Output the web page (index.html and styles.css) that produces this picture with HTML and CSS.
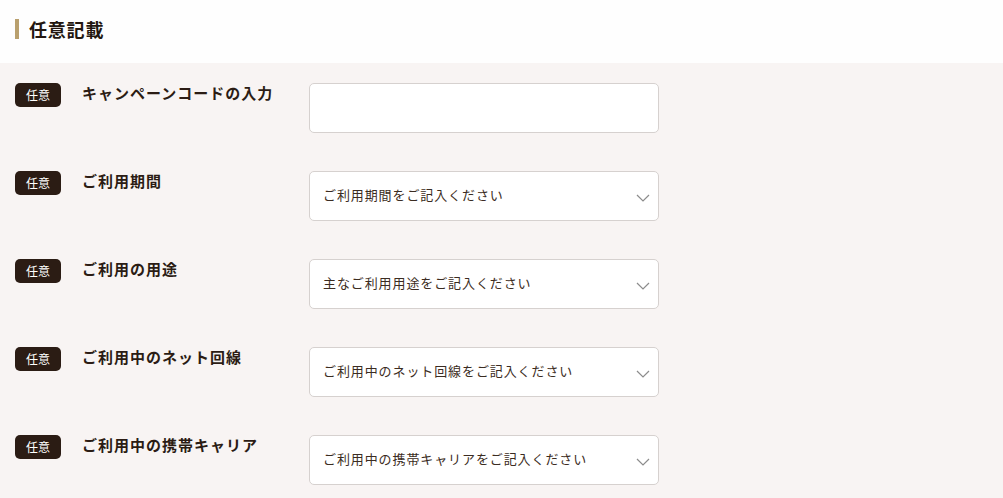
FILE: index.html
```html
<!DOCTYPE html>
<html lang="ja">
<head>
<meta charset="utf-8">
<link rel="stylesheet" href="styles.css">
</head>
<body>
<header class="head">
  <h2 class="title">任意記載</h2>
</header>
<section class="form">
  <div class="row">
    <span class="badge">任意</span>
    <span class="label">キャンペーンコードの入力</span>
    <div class="field"></div>
  </div>
  <div class="row">
    <span class="badge">任意</span>
    <span class="label">ご利用期間</span>
    <div class="field select"><span>ご利用期間をご記入ください</span><svg class="chev" width="14" height="8" viewBox="0 0 14 8"><polyline points="1,1 7,7 13,1" fill="none" stroke="#8c8c8c" stroke-width="1.2"/></svg></div>
  </div>
  <div class="row">
    <span class="badge">任意</span>
    <span class="label">ご利用の用途</span>
    <div class="field select"><span>主なご利用用途をご記入ください</span><svg class="chev" width="14" height="8" viewBox="0 0 14 8"><polyline points="1,1 7,7 13,1" fill="none" stroke="#8c8c8c" stroke-width="1.2"/></svg></div>
  </div>
  <div class="row">
    <span class="badge">任意</span>
    <span class="label">ご利用中のネット回線</span>
    <div class="field select"><span>ご利用中のネット回線をご記入ください</span><svg class="chev" width="14" height="8" viewBox="0 0 14 8"><polyline points="1,1 7,7 13,1" fill="none" stroke="#8c8c8c" stroke-width="1.2"/></svg></div>
  </div>
  <div class="row">
    <span class="badge">任意</span>
    <span class="label">ご利用中の携帯キャリア</span>
    <div class="field select"><span>ご利用中の携帯キャリアをご記入ください</span><svg class="chev" width="14" height="8" viewBox="0 0 14 8"><polyline points="1,1 7,7 13,1" fill="none" stroke="#8c8c8c" stroke-width="1.2"/></svg></div>
  </div>
</section>
</body>
</html>
```

FILE: styles.css
```css
html, body {
  margin: 0;
  padding: 0;
}
body {
  font-family: "Noto Sans CJK JP", "Noto Sans", sans-serif;
  color: #2b1c14;
  background: #f8f4f3;
}
.head {
  background: #fefefe;
  height: 63px;
  padding: 0 15px;
  box-sizing: border-box;
  display: flex;
  align-items: flex-start;
  padding-top: 19px;
}
.title {
  margin: 0;
  font-size: 18px;
  font-weight: 700;
  line-height: 20px;
  letter-spacing: 0.8px;
  color: #231710;
  border-left: 4px solid #b9a06e;
  padding-left: 10px;
}
.form {
  display: flex;
  flex-direction: column;
  gap: 38px;
  padding: 20px 0 40px 15px;
}
.row {
  display: flex;
  align-items: flex-start;
}
.badge {
  width: 46px;
  height: 24px;
  border-radius: 5px;
  background: #2b1c14;
  color: #fff;
  font-size: 12px;
  line-height: 24px;
  text-align: center;
  flex: none;
}
.label {
  margin-left: 21px;
  width: 227px;
  font-size: 15px;
  font-weight: 700;
  line-height: 20px;
  letter-spacing: 1px;
  color: #2b1c14;
  flex: none;
}
.field {
  width: 350px;
  height: 50px;
  box-sizing: border-box;
  border: 1px solid #d6d1cf;
  border-radius: 5px;
  background: #fff;
  flex: none;
}
.select {
  display: flex;
  align-items: center;
  justify-content: space-between;
  padding: 0 8px 4px 13px;
  font-size: 13px;
  letter-spacing: 0.9px;
  color: #3b2c22;
}
.chev {
  margin-top: 8px;
}
```
